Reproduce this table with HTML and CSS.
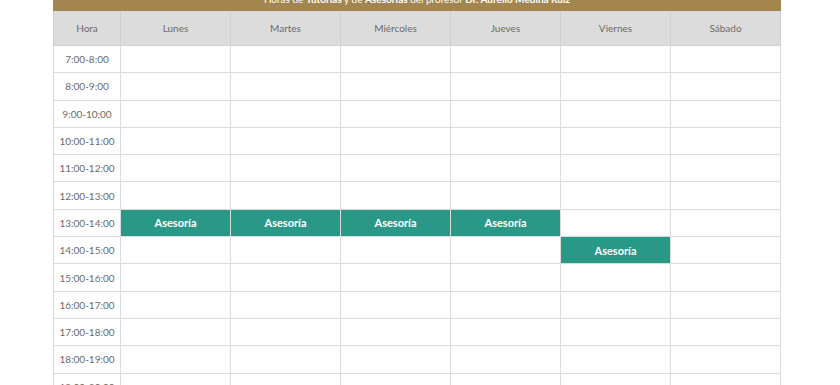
FILE: index.html
```html
<!DOCTYPE html>
<html lang="es">
<head>
<meta charset="utf-8">
<link rel="stylesheet" href="styles.css">
</head>
<body>
<div class="wrap">
  <div class="banner">Horas de <b>Tutorías</b> y de <b>Asesorías</b> del profesor <b>Dr. Aurelio Medina Ruiz</b></div>
  <table class="sched">
    <thead>
      <tr><th class="hcol">Hora</th><th>Lunes</th><th>Martes</th><th>Miércoles</th><th>Jueves</th><th>Viernes</th><th>Sábado</th></tr>
    </thead>
    <tbody>
      <tr><td class="hcol">7:00-8:00</td><td></td><td></td><td></td><td></td><td></td><td></td></tr>
      <tr><td class="hcol">8:00-9:00</td><td></td><td></td><td></td><td></td><td></td><td></td></tr>
      <tr><td class="hcol">9:00-10:00</td><td></td><td></td><td></td><td></td><td></td><td></td></tr>
      <tr><td class="hcol">10:00-11:00</td><td></td><td></td><td></td><td></td><td></td><td></td></tr>
      <tr><td class="hcol">11:00-12:00</td><td></td><td></td><td></td><td></td><td></td><td></td></tr>
      <tr><td class="hcol">12:00-13:00</td><td></td><td></td><td></td><td></td><td></td><td></td></tr>
      <tr><td class="hcol">13:00-14:00</td><td class="ase">Asesoría</td><td class="ase">Asesoría</td><td class="ase">Asesoría</td><td class="ase">Asesoría</td><td></td><td></td></tr>
      <tr><td class="hcol">14:00-15:00</td><td></td><td></td><td></td><td></td><td class="ase">Asesoría</td><td></td></tr>
      <tr><td class="hcol">15:00-16:00</td><td></td><td></td><td></td><td></td><td></td><td></td></tr>
      <tr><td class="hcol">16:00-17:00</td><td></td><td></td><td></td><td></td><td></td><td></td></tr>
      <tr><td class="hcol">17:00-18:00</td><td></td><td></td><td></td><td></td><td></td><td></td></tr>
      <tr><td class="hcol">18:00-19:00</td><td></td><td></td><td></td><td></td><td></td><td></td></tr>
      <tr><td class="hcol">19:00-20:00</td><td></td><td></td><td></td><td></td><td></td><td></td></tr>
    </tbody>
  </table>
</div>
</body>
</html>
```
FILE: styles.css
```css
html, body {
  margin: 0;
  padding: 0;
  background: #fff;
  overflow: hidden;
}
body {
  font-family: Lato, "Open Sans", sans-serif;
  color: #666;
}
.wrap {
  width: 728px;
  margin: -13px 0 0 53px;
}
.banner {
  height: 24px;
  line-height: 24px;
  background: #a3854f;
  color: #fff;
  font-size: 10px;
  text-align: center;
}
.banner b {
  font-weight: 700;
}
.sched {
  width: 728px;
  border-collapse: collapse;
  table-layout: fixed;
}
.sched th, .sched td {
  border: 1px solid #dcdcdc;
  padding: 0;
  text-align: center;
  font-size: 10px;
  font-weight: 400;
  color: #6a6a6a;
}
.sched th {
  background: #dcdcdc;
  border-color: #d0d0d0;
  height: 34px;
  border-top: none;
}
.sched td {
  height: 26.3px;
}
.sched .hcol {
  width: 66px;
}
.sched td.ase {
  background: #2a9886;
  color: #fff;
  font-weight: 700;
  font-size: 11px;
  border-color: #dcdcdc;
}
```
